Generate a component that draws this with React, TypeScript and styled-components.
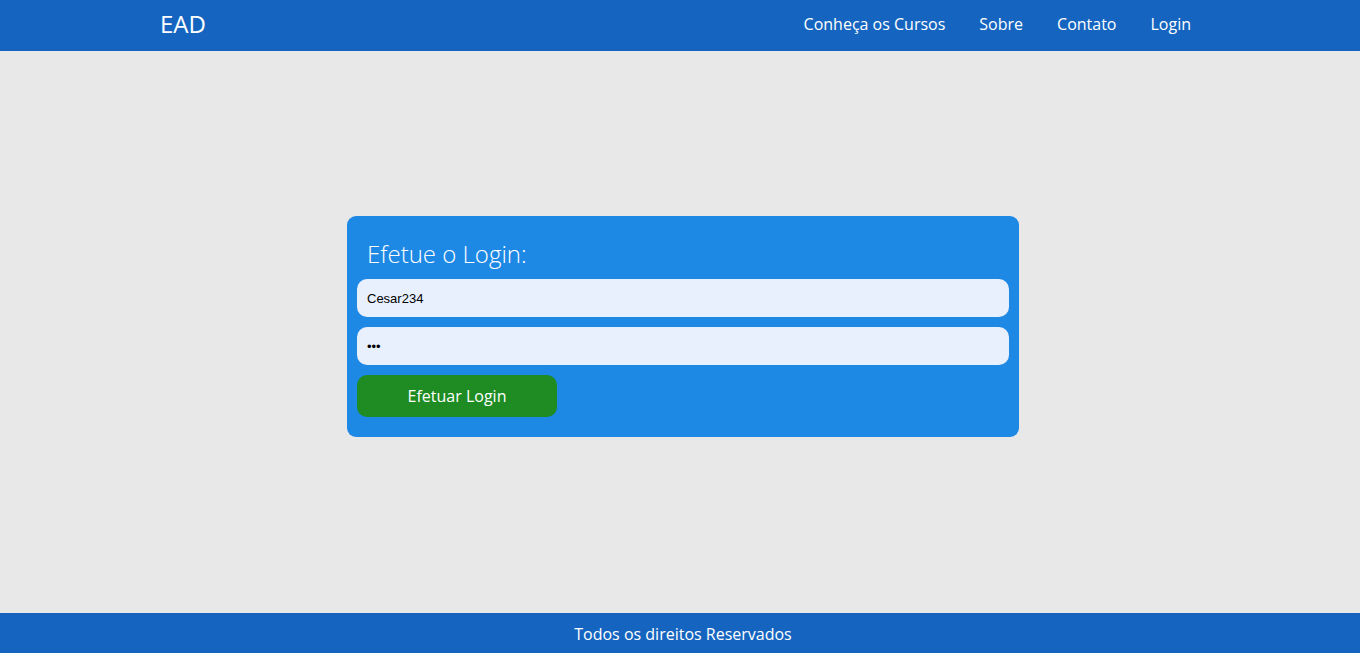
import React from "react";
import styled, { createGlobalStyle } from "styled-components";

const GlobalStyle = createGlobalStyle`
  * { box-sizing: border-box; }
  html, body { margin: 0; padding: 0; }
  body {
    background: #e8e8e8;
    font-family: "Open Sans", "Noto Sans", sans-serif;
  }
`;

const Page = styled.div`
  min-height: 100vh;
  display: flex;
  flex-direction: column;
`;

const Header = styled.header`
  height: 51px;
  background: #1565c0;
  display: flex;
  align-items: center;
  justify-content: space-between;
  padding: 0 169px 4px 160px;
  color: #fff;
`;

const Brand = styled.div`
  font-size: 24px;
  line-height: 1;
  font-weight: 400;
  margin-top: 1px;
`;

const Nav = styled.nav`
  display: flex;
  gap: 34px;
`;

const NavLink = styled.a`
  color: #fff;
  text-decoration: none;
  font-size: 16px;
`;

const Main = styled.main`
  flex: 1;
  display: flex;
  align-items: center;
  justify-content: center;
  padding: 0 0 11px 6px;
`;

const Card = styled.form`
  width: 672px;
  background: #1e88e5;
  border-radius: 9px;
  padding: 20px 10px 20px;
  display: flex;
  flex-direction: column;
  gap: 10px;
`;

const Title = styled.h2`
  margin: 2px 0 -1px 10px;
  color: #fff;
  font-weight: 300;
  font-size: 24px;
  line-height: 32px;
`;

const Input = styled.input`
  height: 38px;
  width: 100%;
  border: none;
  border-radius: 10px;
  background: #e8f0fe;
  padding: 0 10px;
  font-family: "Liberation Sans", Arial, sans-serif;
  font-size: 13px;
  color: #000;
  outline: none;
`;

const Button = styled.button`
  width: 200px;
  height: 42px;
  border: none;
  border-radius: 10px;
  background: #1e8c23;
  color: #fff;
  font-family: "Open Sans", sans-serif;
  font-size: 16px;
  cursor: pointer;
`;

const Footer = styled.footer`
  height: 40px;
  background: #1565c0;
  color: #fff;
  display: flex;
  align-items: center;
  justify-content: center;
  padding: 1px 0 0 6px;
  font-size: 16px;
`;

export default function App() {
  return (
    <>
      <GlobalStyle />
      <Page>
        <Header>
          <Brand>EAD</Brand>
          <Nav>
            <NavLink href="#">Conheça os Cursos</NavLink>
            <NavLink href="#">Sobre</NavLink>
            <NavLink href="#">Contato</NavLink>
            <NavLink href="#">Login</NavLink>
          </Nav>
        </Header>
        <Main>
          <Card onSubmit={(e) => e.preventDefault()}>
            <Title>Efetue o Login:</Title>
            <Input type="text" defaultValue="Cesar234" />
            <Input type="password" defaultValue="123" />
            <Button type="submit">Efetuar Login</Button>
          </Card>
        </Main>
        <Footer>Todos os direitos Reservados</Footer>
      </Page>
    </>
  );
}
